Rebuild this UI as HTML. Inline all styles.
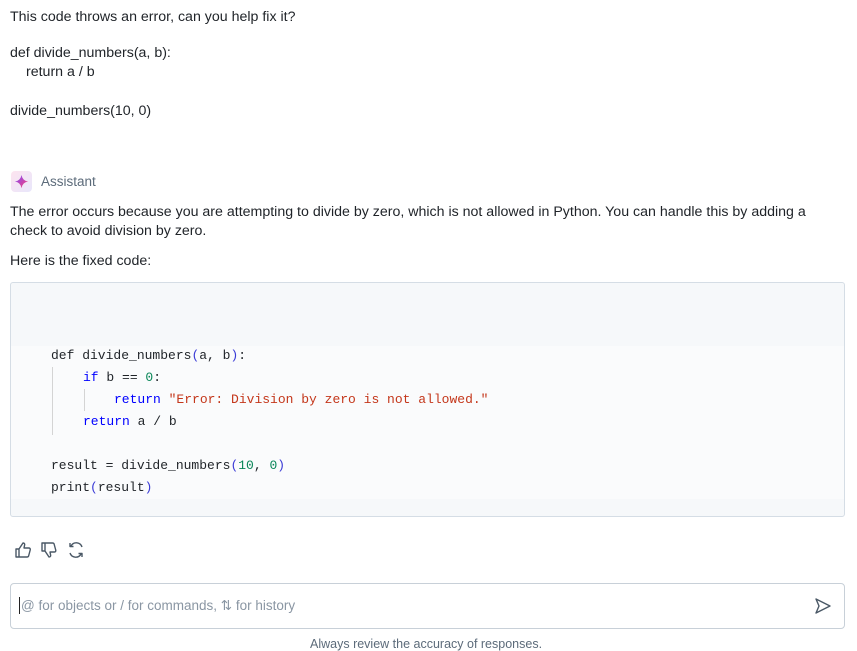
<!DOCTYPE html>
<html><head><style>
body{margin:0;width:857px;height:645px;overflow:hidden;background:#fff;font-family:"Liberation Sans",sans-serif;font-size:14.2px;color:#1f2328;position:relative}
.a{position:absolute;white-space:pre}
.code{position:absolute;left:10px;top:282px;width:833px;height:233px;background:#f6f8fa;border:1px solid #d5dde5;border-radius:3px}
.inner{position:absolute;left:0;top:63px;width:833px;height:153px;background:#fafbfc}
.c{position:absolute;font-family:"Liberation Mono",monospace;font-size:13px;white-space:pre;color:#1f2328}
.k{color:#0000ff}.s{color:#c4371b}.n{color:#098658}.p{color:#3b3bd6}
.bar{position:absolute;width:1px;background:#d4d4d4}
</style></head><body>
<div class="a" style="left:10px;top:9px">This code throws an error, can you help fix it?</div>
<div class="a" style="left:10px;top:45px">def divide_numbers(a, b):</div>
<div class="a" style="left:26px;top:64px">return a / b</div>
<div class="a" style="left:10px;top:103px">divide_numbers(10, 0)</div>
<div style="position:absolute;left:11px;top:171px;width:21px;height:21px;border-radius:4px;background:linear-gradient(135deg,#fde4ef,#e8e6fb)"></div>
<svg style="position:absolute;left:14px;top:174px" width="15" height="15" viewBox="0 0 16 16"><defs><linearGradient id="g" x1="0" y1="0" x2="1" y2="1"><stop offset="0" stop-color="#7c4dff"/><stop offset="1" stop-color="#ff3d71"/></linearGradient></defs><path d="M8 1 Q9 7 15 8 Q9 9 8 15 Q7 9 1 8 Q7 7 8 1Z" fill="url(#g)"/></svg>
<div class="a" style="left:41px;top:174px;color:#5c6b7a;font-size:13.5px">Assistant</div>
<div class="a" style="left:10px;top:204px">The error occurs because you are attempting to divide by zero, which is not allowed in Python. You can handle this by adding a</div>
<div class="a" style="left:10px;top:223px">check to avoid division by zero.</div>
<div class="a" style="left:10px;top:253px">Here is the fixed code:</div>
<div class="code"><div class="inner"></div>
<div class="bar" style="left:41px;top:84px;height:68px"></div>
<div class="bar" style="left:73px;top:106px;height:22px"></div>
<div class="c" style="left:40px;top:65px">def divide_numbers<span class="p">(</span>a, b<span class="p">)</span>:</div>
<div class="c" style="left:72px;top:87px"><span class="k">if</span> b == <span class="n">0</span>:</div>
<div class="c" style="left:103px;top:109px"><span class="k">return</span> <span class="s">"Error: Division by zero is not allowed."</span></div>
<div class="c" style="left:72px;top:131px"><span class="k">return</span> a / b</div>
<div class="c" style="left:40px;top:175px">result = divide_numbers<span class="p">(</span><span class="n">10</span>, <span class="n">0</span><span class="p">)</span></div>
<div class="c" style="left:40px;top:197px">print<span class="p">(</span>result<span class="p">)</span></div>
</div>
<svg style="position:absolute;left:14px;top:541px" width="74" height="18" viewBox="0 0 74 18" fill="none" stroke="#4a5866" stroke-width="1.4" stroke-linejoin="round">
<path d="M2 8h3v8H2zM5 8l4-6c1.5 0 2 1 1.5 2.5L10 7h5c1 0 1.5 1 1.2 2l-1.6 6c-.3.8-.8 1-1.6 1H5"/>
<path d="M28 2h3v8h-3zM31 10l4 6c1.5 0 2-1 1.5-2.5L36 11h4.5c1 0 1.5-1 1.2-2l-1.6-6c-.3-.8-.8-1-1.6-1H31"/>
<path d="M68 6a6 6 0 0 0-11-1M56 2v3.5h3.5M56 12a6 6 0 0 0 11 1M68 16v-3.5h-3.5"/>
</svg>
<div style="position:absolute;left:10px;top:583px;width:833px;height:44px;border:1px solid #c8d0d8;border-radius:4px"></div>
<div style="position:absolute;left:19px;top:597px;width:1px;height:17px;background:#222"></div>
<div class="a" style="left:21px;top:598px;color:#8a96a3;font-size:13.5px">@ for objects or / for commands, ⇅ for history</div>
<svg style="position:absolute;left:814px;top:597px" width="18" height="18" viewBox="0 0 18 18" fill="none" stroke="#4a5866" stroke-width="1.4" stroke-linejoin="round"><path d="M2 2l14 7-14 7 3-7z"/></svg>
<div class="a" style="left:310px;top:637px;color:#5c6b7a;font-size:12.5px">Always review the accuracy of responses.</div>
</body></html>
